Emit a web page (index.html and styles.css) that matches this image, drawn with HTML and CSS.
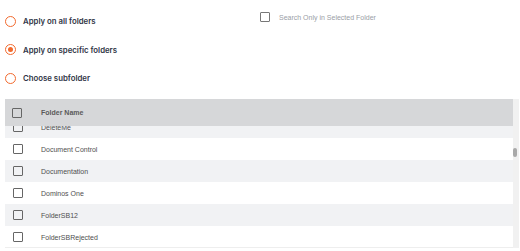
FILE: index.html
```html
<!DOCTYPE html>
<html lang="en">
<head>
  <meta charset="UTF-8" />
  <title>Folder scope</title>
  <link rel="stylesheet" href="styles.css">
</head>
<body>
  <div class="top">
    <!-- Scope options -->
    <div class="opciones">
      <label class="opcion"><span class="radio"></span>Apply on all folders</label>
      <label class="opcion"><span class="radio activo"></span>Apply on specific folders</label>
      <label class="opcion"><span class="radio"></span>Choose subfolder</label>
    </div>
    <label class="buscar"><span class="caja"></span>Search Only in Selected Folder</label>
  </div>

  <div class="rejilla">
    <div class="tabla">
      <div class="cabecera"><span class="caja"></span>Folder Name</div>
      <div class="cuerpo">
        <div class="lista">
          <div class="fila gris"><span class="caja"></span>DeleteMe</div>
          <div class="fila"><span class="caja"></span>Document Control</div>
          <div class="fila gris"><span class="caja"></span>Documentation</div>
          <div class="fila"><span class="caja"></span>Dominos One</div>
          <div class="fila gris"><span class="caja"></span>FolderSB12</div>
          <div class="fila"><span class="caja"></span>FolderSBRejected</div>
        </div>
      </div>
    </div>
    <div class="barra"><div class="pulgar"></div></div>
  </div>
</body>
</html>
```

FILE: styles.css
```css
/* ---------- Colores ---------- */
:root{
  --naranja:#f26a2e;
  --texto:#2f3545;
  --gris:#555;
}
*{box-sizing:border-box}
body{
  margin:0;
  font-family:"Liberation Sans",Arial,sans-serif;
  background:#fff;
  width:520px;
  height:251px;
  overflow:hidden;
}

/* ---------- Parte superior ---------- */
.top{
  display:flex;
  height:99px;
}
.opciones{
  width:255px;
  padding:7px 0 0 5px;
  display:flex;
  flex-direction:column;
}
.opcion{
  display:flex;
  align-items:center;
  height:28.5px;
  font-family:Inter,sans-serif;
  font-size:7.8px;
  font-weight:600;
  color:var(--texto);
}
.radio{
  width:11px;height:11px;
  border:1.5px solid var(--naranja);
  border-radius:50%;
  margin-right:7px;
  display:flex;
  align-items:center;
  justify-content:center;
}
.radio.activo::after{
  content:"";
  width:5px;height:5px;
  border-radius:50%;
  background:var(--naranja);
}
.buscar{
  display:flex;
  align-items:center;
  height:12px;
  margin:11px 0 0 5px;
  font-size:7px;
  color:#9a9ea6;
}
.caja{
  width:10px;height:10px;
  border:1.3px solid #666;
  border-radius:1px;
  flex:none;
}
.buscar .caja{margin-right:9px;border-color:#777}

/* ---------- Tabla ---------- */
.rejilla{
  display:flex;
  padding-left:5px;
}
.tabla{width:508px}
.cabecera{
  height:27px;
  background:#d6d7d9;
  display:flex;
  align-items:center;
  padding-left:7px;
  font-size:7px;
  font-weight:bold;
  color:#5a5a5a;
}
.cabecera .caja{margin-right:19px}
.cuerpo{
  height:122px;
  overflow:hidden;
  border-bottom:1px solid #eee;
}
.lista{margin-top:-10px}
.fila{
  height:22px;
  display:flex;
  align-items:center;
  padding-left:8px;
  font-size:7px;
  color:#4f4f4f;
}
.fila .caja{margin-right:18px}
.fila.gris{background:#f1f2f4}

/* ---------- Barra de desplazamiento ---------- */
.barra{
  width:6px;
  background:#f1f1f1;
  padding-top:49px;
}
.pulgar{
  width:4px;
  height:9px;
  border-radius:2px;
  background:#a9a9a9;
}
```
